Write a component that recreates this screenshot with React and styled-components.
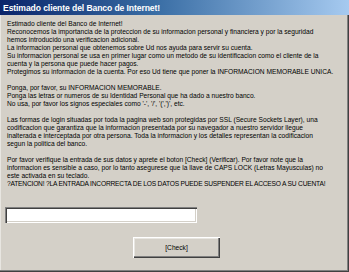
import React from "react";
import styled, { createGlobalStyle } from "styled-components";

const Global = createGlobalStyle`
  html, body { margin: 0; padding: 0; background: #d4d0c8; }
  body { font-family: "Liberation Sans", Arial, sans-serif; }
`;

const Window = styled.div`
  width: 349px;
  height: 272px;
  box-sizing: border-box;
  background: #d4d0c8;
  display: flex;
  flex-direction: column;
  box-shadow: inset -1px -1px 0 #404040, inset -2px -2px 0 #808080, inset 1px 0 0 #e8e6e1;
  overflow: hidden;
`;

const TitleBar = styled.div`
  height: 15px;
  flex: none;
  display: flex;
  align-items: center;
  padding-left: 3px;
  background: linear-gradient(to right, #0a246a 0%, #3a6ea5 45%, #a6caf0 100%);
  color: #ffffff;
  font-weight: bold;
  font-size: 8.6px;
  letter-spacing: -0.1px;
  white-space: nowrap;
`;

const Body = styled.div`
  flex: 1;
  display: flex;
  flex-direction: column;
  padding: 5px 0 0 7px;
`;

const Message = styled.div`
  font-size: 6.65px;
  line-height: 8.03px;
  color: #000000;
  white-space: nowrap;
`;

const Line = styled.div`
  height: 8.03px;
  letter-spacing: ${(p) => (p.$caps ? "-0.2px" : "0")};
`;

const Field = styled.input`
  margin: 19px 0 0 -2px;
  width: 192px;
  height: 16px;
  box-sizing: border-box;
  background: #ffffff;
  border: none;
  padding: 0 3px;
  outline: none;
  box-shadow: inset 1px 1px 0 #808080, inset 2px 2px 0 #404040,
    inset -1px -1px 0 #ffffff, inset -2px -2px 0 #d4d0c8;
  font-size: 6.8px;
  font-family: inherit;
`;

const ButtonRow = styled.div`
  display: flex;
  justify-content: center;
  margin: 14px 0 0 -7px;
  padding-left: 4px;
`;

const Button = styled.button`
  width: 87px;
  height: 21px;
  box-sizing: border-box;
  border: none;
  background: #d4d0c8;
  box-shadow: inset 1px 1px 0 #ffffff, inset -1px -1px 0 #404040,
    inset -2px -2px 0 #808080, inset 2px 2px 0 #e8e6e1;
  font-family: inherit;
  font-size: 6.65px;
  color: #000000;
  padding: 0;
`;

const lines = [
  "Estimado cliente del Banco de Internet!",
  "Reconocemos la importancia de la proteccion de su informacion personal y financiera y por la seguridad",
  "hemos introducido una verificacion adicional.",
  "La informacion personal que obtenemos sobre Ud nos ayuda para servir su cuenta.",
  "Su informacion personal se usa en primer lugar como un metodo de su identificacion como el cliente de la",
  "cuenta y la persona que puede hacer pagos.",
  "Protegimos su informacion de la cuenta. Por eso Ud tiene que poner la INFORMACION MEMORABLE UNICA.",
  "",
  "Ponga, por favor, su INFORMACION MEMORABLE.",
  "Ponga las letras or numeros de su Identidad Personal que ha dado a nuestro banco.",
  "No usa, por favor los signos especiales como '-', '/', '(',')', etc.",
  "",
  "Las formas de login situadas por toda la pagina web son protegidas por SSL (Secure Sockets Layer), una",
  "codificacion que garantiza que la informacion presentada por su navegador a nuestro servidor llegue",
  "inalterada e interceptada por otra persona. Toda la informacion y los detalles representan la codificacion",
  "segun la politica del banco.",
  "",
  "Por favor verifique la entrada de sus datos y aprete el boton [Check] (Verificar). Por favor note que la",
  "informacion es sensible a caso, por lo tanto asegurese que la llave de CAPS LOCK (Letras Mayusculas) no",
  "este activada en su teclado.",
];

const warning =
  "?ATENCION! ?LA ENTRADA INCORRECTA DE LOS DATOS PUEDE SUSPENDER EL ACCESO A SU CUENTA!";

export default function App() {
  return (
    <>
      <Global />
      <Window>
        <TitleBar>Estimado cliente del Banco de Internet!</TitleBar>
        <Body>
          <Message>
            {lines.map((t, i) => (
              <Line key={i}>{t}</Line>
            ))}
            <Line $caps>{warning}</Line>
          </Message>
          <Field type="text" />
          <ButtonRow>
            <Button type="button">[Check]</Button>
          </ButtonRow>
        </Body>
      </Window>
    </>
  );
}
